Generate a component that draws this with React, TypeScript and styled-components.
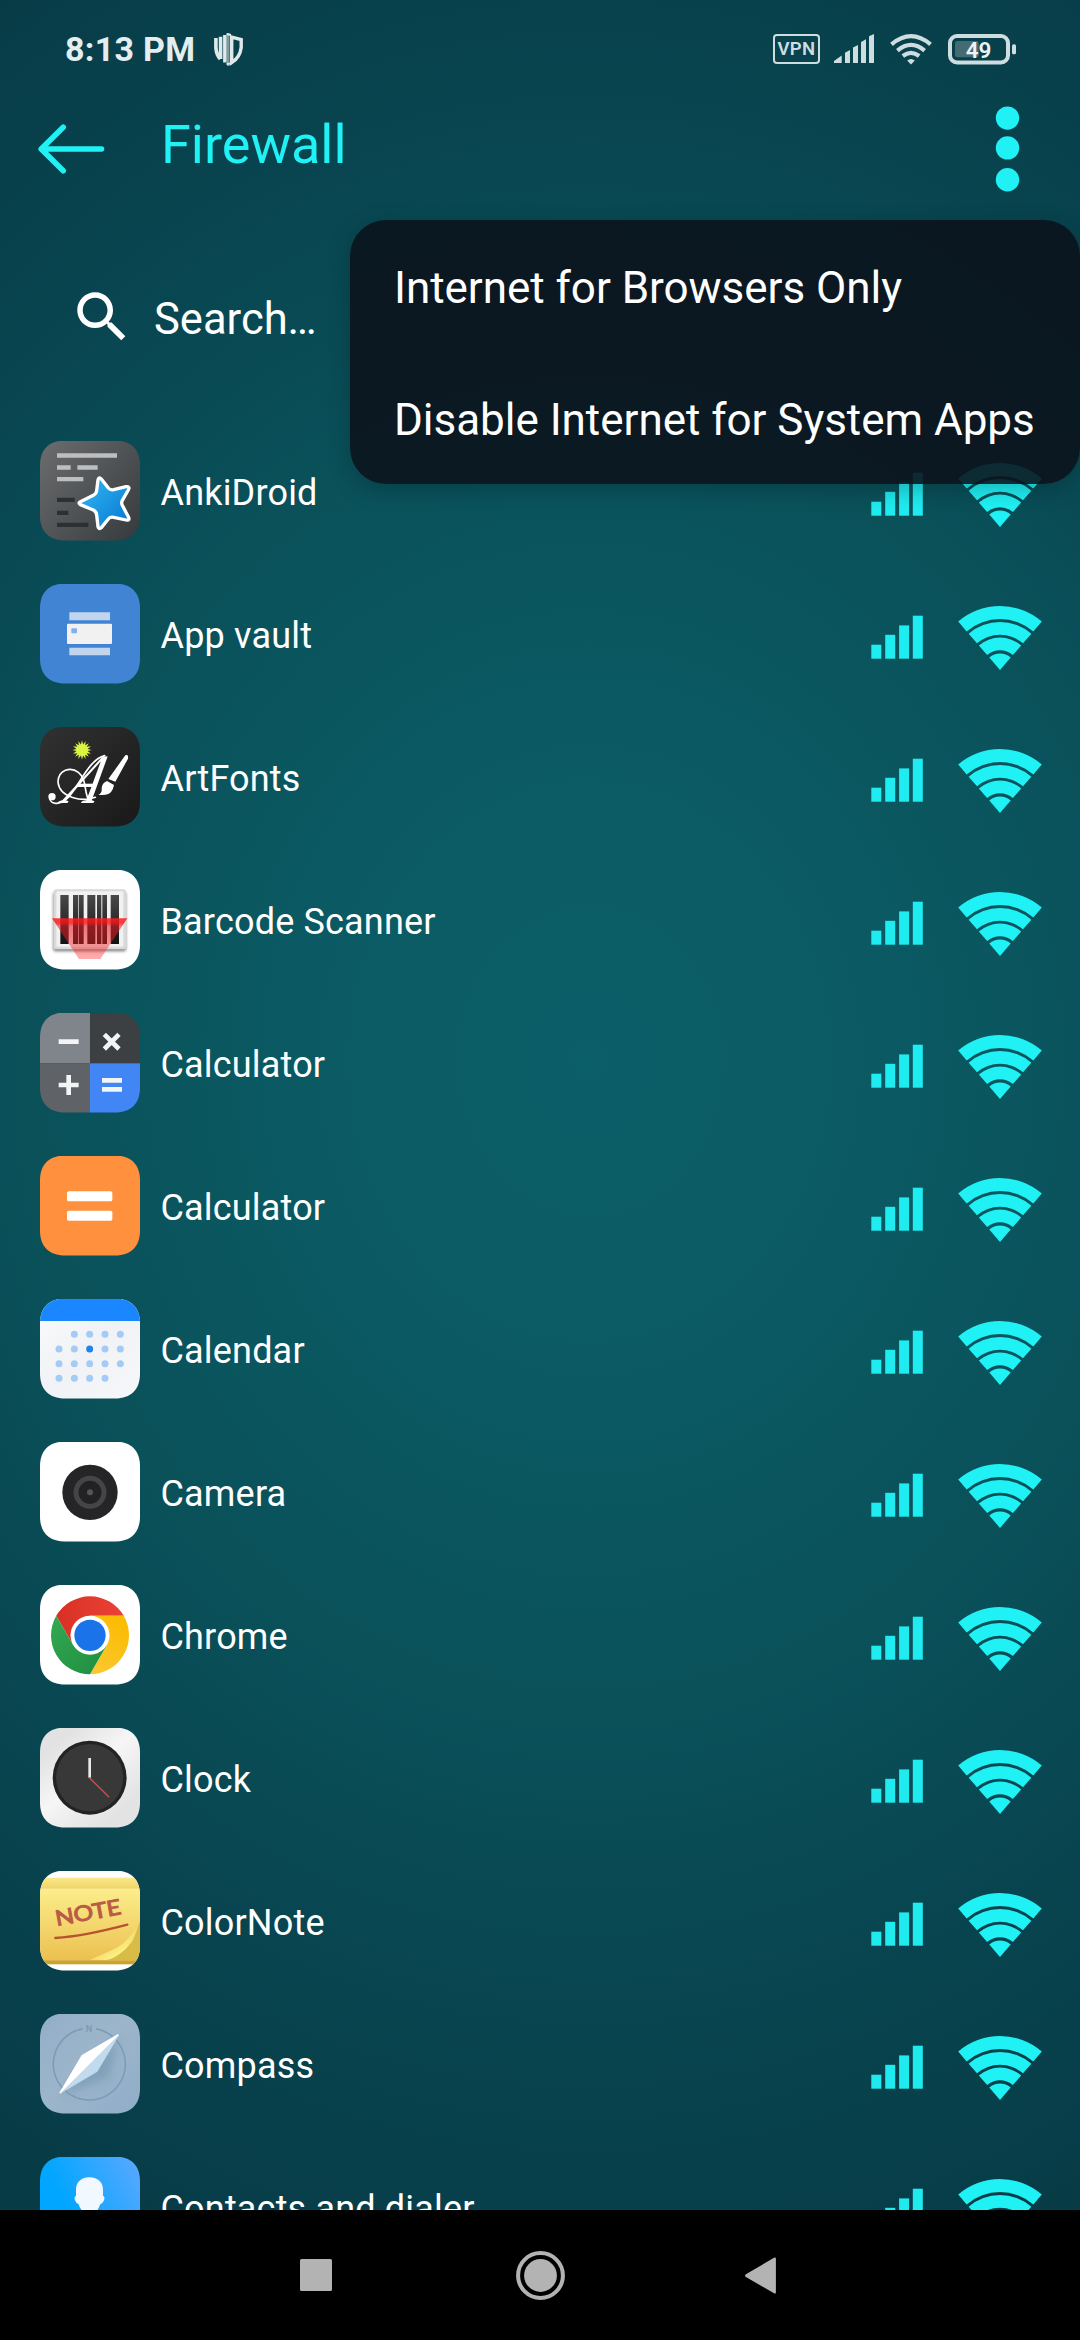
import React from 'react';
import styled, { createGlobalStyle } from 'styled-components';

const CYAN = '#20f1f5';
const FONT = 'Roboto, "Noto Sans", sans-serif';

const GlobalStyle = createGlobalStyle`
  *, *::before, *::after { box-sizing: border-box; }
  body { margin: 0; background: #000; }
`;

const Screen = styled.div`
  position: relative;
  display: flex;
  flex-direction: column;
  width: 1080px;
  height: 2340px;
  overflow: hidden;
  color: #fff;
  font-family: ${FONT};
  background: radial-gradient(ellipse 1120px 1300px at 590px 1060px,
    #0b5f68 0%, #0b5b64 22%, #0a515a 50%, #08444f 75%, #073b46 100%);
`;

const StatusBar = styled.header`
  display: flex;
  align-items: center;
  height: 98px;
  padding: 0 64px 0 65px;
  color: #cddde0;
`;

const Time = styled.span`
  margin-right: 19px;
  font-size: 34px;
  font-weight: 700;
  line-height: 40px;
  letter-spacing: 0.3px;
  color: #e5eeef;
`;

const StatusIcons = styled.div`
  display: flex;
  align-items: center;
  margin-left: auto;
`;

const VpnBadge = styled.span`
  width: 47px;
  height: 30px;
  margin-right: 14px;
  border: 2.4px solid currentColor;
  border-radius: 4px;
  font-size: 18.5px;
  font-weight: 600;
  line-height: 26px;
  letter-spacing: 0.4px;
  text-align: center;
`;

const Glyph = styled.svg<{ $gap?: number }>`
  display: block;
  flex: none;
  margin-right: ${(p) => p.$gap ?? 0}px;
  overflow: visible;
`;

const TopBar = styled.div`
  display: flex;
  align-items: center;
  height: 101px;
  padding: 0 60px 0 38px;
`;

const Title = styled.h1`
  margin: 0 auto 8px 56px;
  font-size: 54px;
  font-weight: 400;
  line-height: 64px;
  color: ${CYAN};
`;

const SearchBar = styled.div`
  display: flex;
  align-items: center;
  height: 220px;
  padding: 16px 0 0 69px;
`;

const SearchHint = styled.span`
  padding-top: 6px;
  margin-left: 19px;
  font-size: 43.5px;
  line-height: 52px;
`;

const AppList = styled.ul`
  flex: 1;
  min-height: 0;
  margin: 0;
  padding: 0;
  overflow: hidden;
  list-style: none;
`;

const AppRow = styled.li`
  display: flex;
  align-items: center;
  height: 143px;
  padding: 0 38px 0 40px;
`;

const AppIcon = styled.svg`
  display: block;
  flex: none;
  width: 100px;
  height: 100px;
  clip-path: path('M25 0H75C91 0 100 9 100 25V75C100 91 91 100 75 100H25C9 100 0 91 0 75V25C0 9 9 0 25 0Z');
`;

const AppName = styled.span`
  flex: 1;
  padding-top: 4px;
  margin-left: 20.5px;
  font-size: 36px;
  line-height: 44px;
  letter-spacing: 0.18px;
`;

const Toggles = styled.div`
  display: flex;
  gap: 35px;
  margin-top: 8px;
`;

const Menu = styled.div`
  position: absolute;
  top: 220px;
  right: 0;
  display: flex;
  flex-direction: column;
  width: 730px;
  height: 264px;
  border-radius: 36px;
  background: rgba(11, 18, 27, 0.89);
  box-shadow: 0 6px 22px rgba(0, 20, 26, 0.28);
`;

const MenuItem = styled.div`
  display: flex;
  align-items: center;
  height: 132px;
  padding: 4px 0 0 44px;
  font-size: 44px;
  line-height: 52px;
  letter-spacing: -0.03px;
  white-space: nowrap;
`;

const NavBar = styled.nav`
  display: flex;
  align-items: center;
  height: 130px;
  padding-left: 300px;
  background: #000;
`;

const sector = (cx: number, cy: number, outer: number, inner: number) => {
  const s = 0.6533;
  const c = 0.7571;
  const p = (r: number, side: number) => `${(cx + side * s * r).toFixed(2)} ${(cy - c * r).toFixed(2)}`;
  return inner === 0
    ? `M${cx} ${cy}L${p(outer, -1)}A${outer} ${outer} 0 0 1 ${p(outer, 1)}Z`
    : `M${p(outer, -1)}A${outer} ${outer} 0 0 1 ${p(outer, 1)}L${p(inner, 1)}A${inner} ${inner} 0 0 0 ${p(inner, -1)}Z`;
};

const MobileSignal = () => (
  <Glyph width={52} height={64} viewBox="0 0 52 64" fill={CYAN} opacity={0.97}>
    <rect x="0.3" y="38.7" width="10" height="14" />
    <rect x="14.2" y="28.8" width="10" height="23.9" />
    <rect x="28.1" y="19.4" width="10" height="33.3" />
    <rect x="41.8" y="9.7" width="10" height="43" />
  </Glyph>
);

const WifiFan = () => (
  <Glyph width={84} height={64} viewBox="0 0 84 64" fill={CYAN}>
    <path d={sector(42, 64, 64, 51)} />
    <path d={sector(42, 64, 48, 35.2)} />
    <path d={sector(42, 64, 32.4, 19.7)} />
    <path d={sector(42, 64, 16.4, 0)} />
  </Glyph>
);

const AnkiArt = () => (
  <>
    <defs>
      <linearGradient id="anki" x2="1" y2="0.8">
        <stop offset="0" stopColor="#6b6d6f" />
        <stop offset="1" stopColor="#3b3e40" />
      </linearGradient>
      <linearGradient id="star" x2="1" y2="1">
        <stop offset="0.1" stopColor="#2db4f2" />
        <stop offset="0.9" stopColor="#0c7dd3" />
      </linearGradient>
    </defs>
    <rect width="300" height="300" fill="url(#anki)" />
    <path fill="#bdbebf" d="M51 37h180v13H51zM51 73h41v13H51zM112 73h61v13h-61zM51 108h79v13H51z" />
    <path fill="#2d3032" d="M51 170h53v13H51zM51 209h34v13H51zM51 245h94v13H51z" />
    <path
      d="M121 182L160 163Q169 158 170 149L174 116Q177 106 184 114L205 141Q211 148 221 146L258 137Q271 136 265 147L247 178Q243 185 247 193L265 227Q271 240 258 237L221 229Q211 227 205 234L184 260Q177 267 174 257L170 222Q169 212 160 207L121 191Q113 186 121 182Z"
      fill="url(#star)" stroke="#fff" strokeWidth="10" strokeLinejoin="round"
    />
  </>
);

const VaultArt = () => (
  <>
    <rect width="300" height="300" fill="#4184d3" />
    <path fill="#c1d5ef" d="M88 85h122v24H88zM88 191h122v23H88z" />
    <rect x="81" y="119" width="135" height="61" rx="3" fill="#f1f1f1" />
    <rect x="94" y="133" width="17" height="15" rx="3" fill="#83b0ec" />
  </>
);

const burst = Array.from({ length: 32 }, (_, i) => {
  const a = (i * Math.PI) / 16;
  const r = i % 2 ? 17 : 29;
  return `${(126 + r * Math.sin(a)).toFixed(1)},${(69 - r * Math.cos(a)).toFixed(1)}`;
}).join(' ');

const ArtFontsArt = () => (
  <>
    <defs>
      <linearGradient id="ink" x2="1" y2="1">
        <stop offset="0" stopColor="#313131" />
        <stop offset="1" stopColor="#191919" />
      </linearGradient>
    </defs>
    <rect width="300" height="300" fill="url(#ink)" />
    <polygon points={burst} fill="#dcf344" />
    <text transform="translate(62 229) skewX(-27)" fontFamily='"Liberation Serif", serif' fontStyle="italic" fontWeight="400"
      fontSize="212" textLength="98" lengthAdjust="spacingAndGlyphs" fill="#fff">A</text>
    <g fill="none" stroke="#fff" strokeWidth="5" strokeLinecap="round">
      <path d="M166 211C128 226 58 212 54 165C55 128 92 118 115 136C141 156 132 196 146 219" />
      <path d="M29 216C38 238 66 230 88 208C122 166 150 96 194 86" />
    </g>
    <circle cx="36" cy="209" r="11" fill="#fff" />
    <path fill="#fff" d="M256 85Q266 80 264 95L226 164L205 156ZM201 162L222 174Q217 202 196 203Q184 205 175 204Q187 198 185 184Q186 168 201 162Z" />
    <path stroke="#262626" strokeWidth="3" d="M198 157L226 171" />
  </>
);

const BarcodeArt = () => (
  <>
    <defs>
      <linearGradient id="bars" x2="0" y2="1">
        <stop offset="0" stopColor="#494949" />
        <stop offset="1" stopColor="#111" />
      </linearGradient>
      <linearGradient id="laser" x2="0" y2="1">
        <stop offset="0" stopColor="#ff1c1c" stopOpacity="0.85" />
        <stop offset="0.12" stopColor="#f5151b" stopOpacity="0.82" />
        <stop offset="0.2" stopColor="#e8141c" stopOpacity="0.55" />
        <stop offset="1" stopColor="#ff3030" stopOpacity="0.4" />
      </linearGradient>
      <filter id="soft" x="-20%" y="-20%" width="140%" height="140%">
        <feGaussianBlur stdDeviation="5" />
      </filter>
    </defs>
    <rect width="300" height="300" fill="#fff" />
    <rect x="40" y="66" width="218" height="178" rx="8" fill="#555" opacity="0.75" filter="url(#soft)" />
    <rect x="41" y="58" width="217" height="180" rx="8" fill="#d9d9d9" />
    <rect x="49" y="64" width="201" height="166" rx="4" fill="#f1f1f1" />
    <path fill="url(#bars)" d="M61 75h25v147H61zM99 75h16v147H99zM117 75h14v147h-14zM142 75h24v147h-24zM171 75h13v147h-13zM187 75h14v147h-14zM212 75h25v147h-25z" />
    <path fill="url(#laser)" d="M36 145H262L181 267H117Z" />
  </>
);

const QuadCalcArt = () => (
  <>
    <rect width="150" height="151" fill="#80848b" />
    <rect x="150" width="150" height="151" fill="#3c4043" />
    <rect y="151" width="150" height="149" fill="#5f6368" />
    <rect x="150" y="151" width="150" height="149" fill="#4285f4" />
    <path stroke="#f3f4f5" strokeWidth="14" d="M56 86H116M56 216H116M86 186V246M193 64L237 108M237 64L193 108M186 202H246M186 229H246" />
  </>
);

const MiCalcArt = () => (
  <>
    <rect width="300" height="300" fill="#ff903e" />
    <rect x="81" y="106" width="136" height="30" rx="5" fill="#fff" />
    <rect x="81" y="164" width="136" height="30" rx="5" fill="#fff" />
  </>
);

const CalendarArt = () => (
  <>
    <defs>
      <linearGradient id="paper" x2="1" y2="1">
        <stop offset="0" stopColor="#fbfbfc" />
        <stop offset="0.5" stopColor="#f0f2f5" />
        <stop offset="1" stopColor="#f7f8fa" />
      </linearGradient>
    </defs>
    <rect width="300" height="300" fill="url(#paper)" />
    <rect width="300" height="66" fill="#1a86ff" />
    {[106, 150, 194, 238].map((y, r) =>
      [57, 103, 149, 195, 241].map((x, c) =>
        (r === 0 && c === 0) || (r === 3 && c === 4) ? null : (
          <circle key={`${x}-${y}`} cx={x} cy={y} r="10.5" fill={r === 1 && c === 2 ? '#1f83ee' : '#a4cbf5'} />
        ),
      ),
    )}
  </>
);

const CameraArt = () => (
  <>
    <rect width="300" height="300" fill="#fff" />
    <circle cx="150" cy="151" r="83" fill="#252527" />
    <circle cx="150" cy="151" r="42" fill="#222224" stroke="#454548" strokeWidth="15" />
    <circle cx="150" cy="151" r="9" fill="#555558" />
  </>
);

const ChromeArt = () => (
  <>
    <defs>
      <linearGradient id="chromeGreen" x1="1" y1="1" x2="0" y2="0">
        <stop offset="0" stopColor="#1e8e3e" />
        <stop offset="1" stopColor="#34a853" />
      </linearGradient>
      <linearGradient id="chromeYellow" x1="0" y1="1" x2="0.5" y2="0">
        <stop offset="0" stopColor="#fcc934" />
        <stop offset="1" stopColor="#fbbc04" />
      </linearGradient>
      <linearGradient id="chromeRed">
        <stop offset="0" stopColor="#d93025" />
        <stop offset="1" stopColor="#ea4335" />
      </linearGradient>
    </defs>
    <rect width="300" height="300" fill="#fff" />
    <path fill="url(#chromeRed)" d="M48.7 92.5A117 117 0 0 1 251.3 92.5H150L99.3 180.3Z" />
    <path fill="url(#chromeYellow)" d="M251.3 92.5A117 117 0 0 1 150 268L200.7 180.3L150 92.5Z" />
    <path fill="url(#chromeGreen)" d="M150 268A117 117 0 0 1 48.7 92.5L99.3 180.3H200.7Z" />
    <circle cx="150" cy="151" r="58.5" fill="#fff" />
    <circle cx="150" cy="151" r="47" fill="#1a73e8" />
  </>
);

const ClockArt = () => (
  <>
    <defs>
      <linearGradient id="case" x1="0" y1="0.3" x2="0.6" y2="1">
        <stop offset="0" stopColor="#e2e2e2" />
        <stop offset="0.45" stopColor="#f6f6f6" />
        <stop offset="1" stopColor="#e3e3e3" />
      </linearGradient>
    </defs>
    <rect width="300" height="300" fill="url(#case)" />
    <circle cx="149" cy="149" r="111" fill="#232323" />
    <circle cx="149" cy="149" r="101" fill="#383838" />
    <path d="M149 90V149" stroke="#e9e9e9" strokeWidth="8" />
    <path d="M149 150L206 206" stroke="#c64d4b" strokeWidth="4.5" strokeLinecap="round" />
  </>
);

const NoteArt = () => (
  <>
    <defs>
      <linearGradient id="sticky" x2="0" y2="1">
        <stop offset="0" stopColor="#fbee8c" />
        <stop offset="1" stopColor="#ecc050" />
      </linearGradient>
      <linearGradient id="strip" x2="0" y2="1">
        <stop offset="0" stopColor="#fae98a" />
        <stop offset="1" stopColor="#f0d468" />
      </linearGradient>
      <linearGradient id="curl" x1="0.4" y1="0.35" x2="0.75" y2="0.8">
        <stop offset="0" stopColor="#efc955" />
        <stop offset="1" stopColor="#fdf68c" />
      </linearGradient>
    </defs>
    <rect width="300" height="300" fill="#fff" />
    <rect y="52" width="300" height="217" fill="url(#sticky)" />
    <rect y="20" width="300" height="33" fill="url(#strip)" />
    <rect y="268" width="300" height="12" fill="#cba32f" />
    <path fill="#d9bb48" d="M190 268Q252 246 278 212Q291 176 300 150V268Z" />
    <path fill="url(#curl)" d="M150 266Q240 230 252 214Q282 186 297 152Q289 196 258 233Q220 266 198 267Z" />
    <text transform="translate(50 165) rotate(-10.5)" fontFamily="Lato, sans-serif" fontSize="64" fontWeight="400"
      textLength="199" lengthAdjust="spacingAndGlyphs" fill="#b95b45" stroke="#b95b45" strokeWidth="3">NOTE</text>
    <path d="M46 201Q130 196 262 161" fill="none" stroke="#b5542f" strokeWidth="7" strokeLinecap="round" />
  </>
);

const CompassArt = () => (
  <>
    <defs>
      <linearGradient id="dial" x2="1" y2="1">
        <stop offset="0" stopColor="#92aec7" />
        <stop offset="0.45" stopColor="#9cb5ca" />
        <stop offset="1" stopColor="#90adc8" />
      </linearGradient>
      <filter id="haze" x="-30%" y="-30%" width="160%" height="160%">
        <feGaussianBlur stdDeviation="12" />
      </filter>
    </defs>
    <rect width="300" height="300" fill="url(#dial)" />
    <path fill="#7394b0" opacity="0.6" filter="url(#haze)" d="M236 72L205 190L62 245L130 170Z" />
    <path d="M128 44A108 108 0 1 0 168 44" fill="none" stroke="#7a9ab5" strokeWidth="4.5" />
    <text x="147" y="53" fontFamily={FONT} fontSize="27" fontWeight="500" textAnchor="middle" fill="#7a9ab5">N</text>
    <path fill="#fff" stroke="#fff" strokeWidth="5" strokeLinejoin="round" d="M234 63L61 236L127 125Z" />
    <path fill="#c1dbee" d="M238 62L172 173L60 239Z" />
  </>
);

const ContactsArt = () => (
  <>
    <defs>
      <linearGradient id="sky" x1="0" y1="0.5" x2="1" y2="0">
        <stop offset="0.2" stopColor="#00a6ff" />
        <stop offset="1" stopColor="#5ca8ff" />
      </linearGradient>
    </defs>
    <rect width="300" height="300" fill="url(#sky)" />
    <path fill="#f2f8ff" d="M148 61C176 61 189 78 189 98V116Q196 119 192 130Q188 140 181 142Q176 154 173 158V180L230 215V300H66V215L124 180V158Q119 153 116 142Q109 140 105 130Q101 119 108 116V98C108 78 121 61 148 61Z" />
  </>
);

const apps: { name: string; Art: React.FC }[] = [
  { name: 'AnkiDroid', Art: AnkiArt },
  { name: 'App vault', Art: VaultArt },
  { name: 'ArtFonts', Art: ArtFontsArt },
  { name: 'Barcode Scanner', Art: BarcodeArt },
  { name: 'Calculator', Art: QuadCalcArt },
  { name: 'Calculator', Art: MiCalcArt },
  { name: 'Calendar', Art: CalendarArt },
  { name: 'Camera', Art: CameraArt },
  { name: 'Chrome', Art: ChromeArt },
  { name: 'Clock', Art: ClockArt },
  { name: 'ColorNote', Art: NoteArt },
  { name: 'Compass', Art: CompassArt },
  { name: 'Contacts and dialer', Art: ContactsArt },
];

export default function App() {
  return (
    <Screen>
      <GlobalStyle />
      <StatusBar>
        <Time>8:13 PM</Time>
        <Glyph width={29} height={33} viewBox="0 0 29 33" fill="none" stroke="#dfe9ea">
          <path d="M1.9 5V15Q2.5 22 6.3 26M6.6 3.8V26M10.9 2V29.5" strokeWidth="3.6" />
          <path d="M14.3 0V33" stroke="#7e9ca2" strokeWidth="2.6" />
          <path d="M17.7 4.2L27.2 6.5V14.5Q26 24.5 17.7 29.6Z" strokeWidth="3.4" />
          <path d="M12.5 1L17 2M12.5 31L17 30.5" strokeWidth="1.8" />
        </Glyph>
        <StatusIcons>
          <VpnBadge>VPN</VpnBadge>
          <Glyph $gap={16} width={40} height={30} viewBox="0 0 40 30" fill="currentColor">
            <path d="M0 29V27L7.7 21.5V29ZM11 29V18.8L16 16V29ZM19 29V13.6L24 11V29ZM27 29V8L32 5.2V29ZM35 29V2.2L40 0V29Z" />
          </Glyph>
          <Glyph $gap={16} width={42} height={30} viewBox="0 0 42 30" fill="none" stroke="currentColor" strokeWidth="4.2">
            <path d="M1.5 10.3Q21 -6 40.5 10.3M7.4 16.6Q21 5.2 34.6 16.6M12.8 22Q21 15.6 29.2 22" />
            <path d="M17.2 26.6Q21 23.6 24.8 26.6L21 30.4Z" fill="currentColor" stroke="none" />
          </Glyph>
          <Glyph width={68} height={30} viewBox="0 0 68 30" fill="none">
            <rect x="7" y="7" width="23.7" height="16.3" rx="2.5" fill="#456b72" />
            <rect x="2" y="2" width="58" height="26.4" rx="7" stroke="currentColor" strokeWidth="4" />
            <rect x="64" y="10.3" width="4" height="10" rx="1.6" fill="currentColor" />
            <text x="30.6" y="23.7" textAnchor="middle" fontFamily={FONT} fontSize="22.5" fontWeight="600" fill="#edf3f4">49</text>
          </Glyph>
        </StatusIcons>
      </StatusBar>

      <TopBar>
        <Glyph width={67} height={50} viewBox="0 0 67 50" fill="none" stroke={CYAN} strokeWidth="5.6" strokeLinecap="round" strokeLinejoin="round">
          <path d="M63.5 25H4M25.2 3.3L3.2 25L25.2 46.7" />
        </Glyph>
        <Title>Firewall</Title>
        <Glyph width={24} height={86} viewBox="0 0 24 86" fill={CYAN}>
          <circle cx="11.5" cy="12.1" r="11.7" />
          <circle cx="11.5" cy="41.9" r="11.7" />
          <circle cx="11.5" cy="73.8" r="11.7" />
        </Glyph>
      </TopBar>

      <SearchBar>
        <Glyph width={66} height={66} viewBox="0 0 24 24" fill="#fff">
          <path d="M15.5 14h-.79l-.28-.27C15.41 12.59 16 11.11 16 9.5 16 5.91 13.09 3 9.5 3S3 5.91 3 9.5 5.91 16 9.5 16c1.61 0 3.09-.59 4.23-1.57l.27.28v.79l5 4.99L20.49 19l-4.99-5zm-6 0C7.01 14 5 11.99 5 9.5S7.01 5 9.5 5 14 7.01 14 9.5 11.99 14 9.5 14z" />
        </Glyph>
        <SearchHint>Search…</SearchHint>
      </SearchBar>

      <AppList>
        {apps.map(({ name, Art }, i) => (
          <AppRow key={i}>
            <AppIcon viewBox="0 0 300 300">
              <Art />
            </AppIcon>
            <AppName>{name}</AppName>
            <Toggles>
              <MobileSignal />
              <WifiFan />
            </Toggles>
          </AppRow>
        ))}
      </AppList>

      <NavBar>
        <Glyph $gap={183.5} width={32} height={32} viewBox="0 0 32 32" fill="#b3b3b3">
          <rect width="32" height="32" rx="1.5" />
        </Glyph>
        <Glyph $gap={180.5} width={49} height={49} viewBox="0 0 49 49" fill="#b3b3b3">
          <circle cx="24.5" cy="24.5" r="22.4" fill="none" stroke="#b3b3b3" strokeWidth="4" />
          <circle cx="24.5" cy="24.5" r="16.4" />
        </Glyph>
        <Glyph width={31} height={37} viewBox="0 0 31 37" fill="#b3b3b3">
          <path d="M30.9 1.8V35.2Q30.9 37.4 29 36.2L0.9 20Q-0.8 18.7 0.9 17.2L29 0.8Q30.9 -0.4 30.9 1.8Z" />
        </Glyph>
      </NavBar>

      <Menu>
        <MenuItem>Internet for Browsers Only</MenuItem>
        <MenuItem>Disable Internet for System Apps</MenuItem>
      </Menu>
    </Screen>
  );
}
